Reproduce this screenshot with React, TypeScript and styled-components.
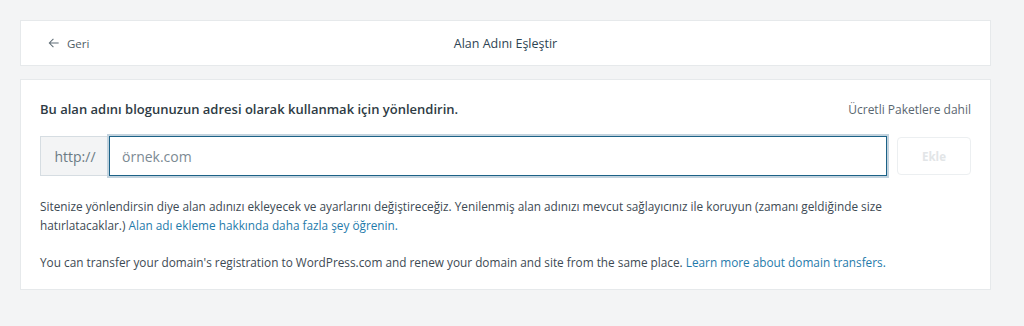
import React from 'react'
import styled, { createGlobalStyle } from 'styled-components'

const GlobalStyle = createGlobalStyle`
  html, body {
    margin: 0;
    padding: 0;
    background: #f3f4f5;
    font-family: "Open Sans", "Noto Sans", sans-serif;
    color: #3d4a53;
  }
  * {
    box-sizing: border-box;
  }
`

const Page = styled.div`
  width: 1024px;
  height: 326px;
  padding: 20px 33px 0 20px;
  display: flex;
  flex-direction: column;
  gap: 14px;
`

const Card = styled.div`
  background: #fff;
  border: 1px solid #e6e9eb;
`

const HeaderCard = styled(Card)`
  height: 46px;
  display: grid;
  grid-template-columns: 1fr auto 1fr;
  align-items: center;
  padding: 0 26px;
`

const BackLink = styled.a`
  display: flex;
  align-items: center;
  gap: 6px;
  font-size: 11.5px;
  color: #4f5d66;
  text-decoration: none;
`

const Title = styled.h1`
  margin: 0;
  font-size: 12.5px;
  font-weight: 400;
  color: #2e4453;
`

const Body = styled(Card)`
  padding: 20px 19px 17px 19px;
  margin-top: -1px;
`

const TopRow = styled.div`
  display: flex;
  justify-content: space-between;
  align-items: baseline;
`

const Heading = styled.h2`
  margin: 0;
  font-size: 13px;
  font-weight: 600;
  color: #2e3b44;
`

const Note = styled.span`
  font-size: 12px;
  color: #5a6770;
`

const InputRow = styled.div`
  display: flex;
  align-items: center;
  margin-top: 18px;
  height: 40px;
`

const Prefix = styled.div`
  height: 40px;
  width: 69px;
  display: flex;
  align-items: center;
  justify-content: center;
  background: #f3f4f5;
  border: 1px solid #d6dde2;
  border-right: none;
  font-size: 14px;
  color: #6b7a84;
`

const Input = styled.input`
  flex: 1;
  height: 40px;
  border: 1px solid #1c6287;
  box-shadow: 0 0 0 2px #c3d3de;
  outline: none;
  padding: 0 12px;
  font-family: inherit;
  font-size: 14px;
  color: #3d4a53;
  &::placeholder {
    color: #7c8a93;
  }
`

const AddButton = styled.button`
  margin-left: 10px;
  width: 74px;
  height: 38px;
  background: #fff;
  border: 1px solid #eceff1;
  border-radius: 4px;
  font-family: inherit;
  font-size: 11.5px;
  font-weight: 700;
  color: #e2e5e7;
`

const Text = styled.p`
  margin: 21px 0 0;
  max-width: 900px;
  font-size: 11.8px;
  line-height: 19px;
  color: #3d4a53;
  & + & {
    margin-top: 18px;
  }
`

const TextLink = styled.a`
  color: #1f7bab;
  text-decoration: none;
`

const ArrowLeft = () => (
  <svg width="14" height="14" viewBox="0 0 24 24" fill="none" stroke="#5f6d76" strokeWidth="1.8">
    <path d="M20 12H4M11 5l-7 7 7 7" />
  </svg>
)

export default function App() {
  return (
    <>
      <GlobalStyle />
      <Page>
        <HeaderCard>
          <BackLink href="#">
            <ArrowLeft />
            Geri
          </BackLink>
          <Title>Alan Adını Eşleştir</Title>
          <span />
        </HeaderCard>
        <Body>
          <TopRow>
            <Heading>Bu alan adını blogunuzun adresi olarak kullanmak için yönlendirin.</Heading>
            <Note>Ücretli Paketlere dahil</Note>
          </TopRow>
          <InputRow>
            <Prefix>http://</Prefix>
            <Input placeholder="örnek.com" />
            <AddButton disabled>Ekle</AddButton>
          </InputRow>
          <Text>
            Sitenize yönlendirsin diye alan adınızı ekleyecek ve ayarlarını değiştireceğiz. Yenilenmiş alan
            adınızı mevcut sağlayıcınız ile koruyun (zamanı geldiğinde size hatırlatacaklar.){' '}
            <TextLink href="#">Alan adı ekleme hakkında daha fazla şey öğrenin.</TextLink>
          </Text>
          <Text>
            You can transfer your domain's registration to WordPress.com and renew your domain and site from
            the same place. <TextLink href="#">Learn more about domain transfers.</TextLink>
          </Text>
        </Body>
      </Page>
    </>
  )
}
